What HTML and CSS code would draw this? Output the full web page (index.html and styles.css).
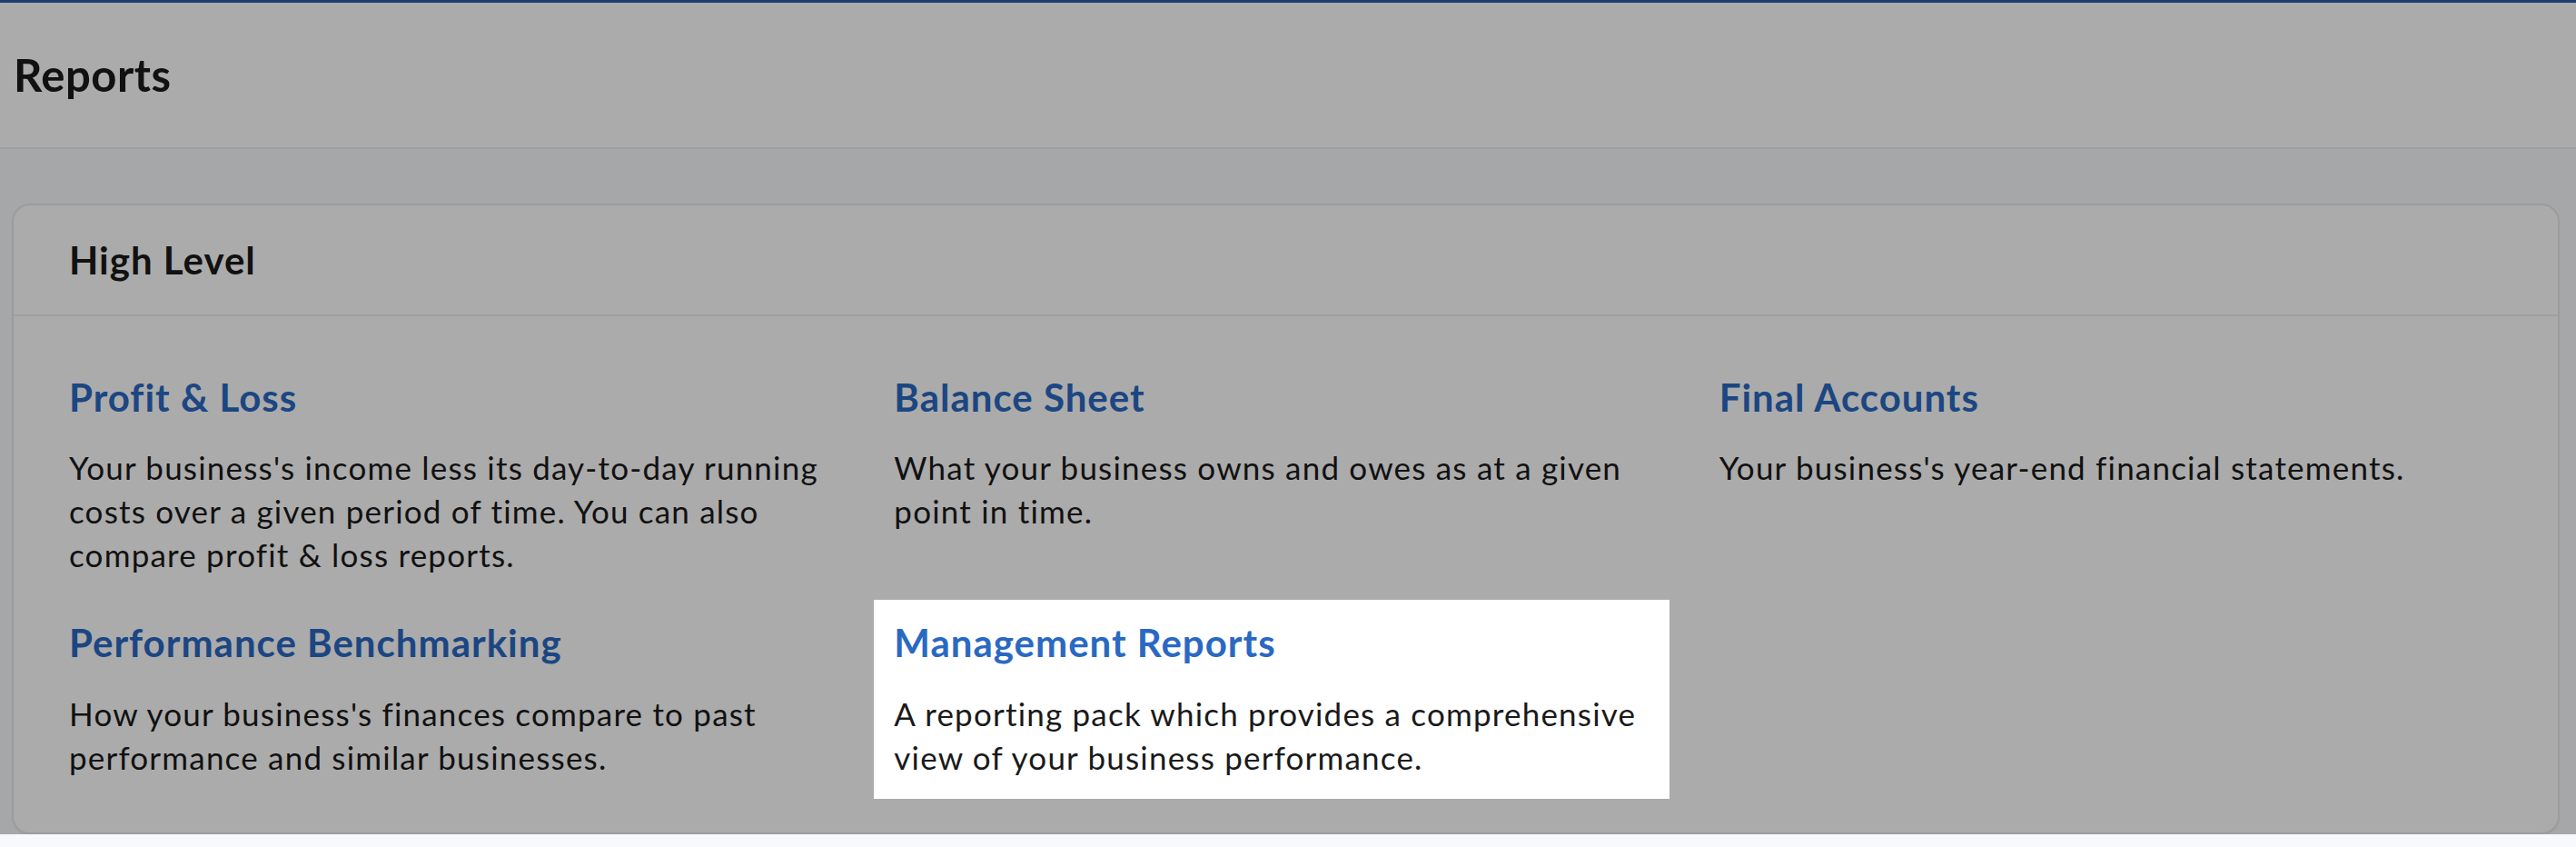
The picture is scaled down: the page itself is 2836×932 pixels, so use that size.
FILE: index.html
```html
<!DOCTYPE html>
<html lang="en">
<head>
    <meta charset="UTF-8">
    <meta name="viewport" content="width=device-width, initial-scale=1.0">
    <title>Reports</title>
    <link rel="stylesheet" href="styles.css">
</head>
<body>
    <div class="page-header">
        <h1>Reports</h1>
    </div>
    <div class="content">
        <div class="card">
            <div class="card-header">
                <h2>High Level</h2>
            </div>
            <div class="card-body">
                <div class="report">
                    <a class="report-title" href="#">Profit &amp; Loss</a>
                    <p>Your business's income less its day-to-day running costs over a given period of time. You can also compare profit &amp; loss reports.</p>
                </div>
                <div class="report">
                    <a class="report-title" href="#">Balance Sheet</a>
                    <p>What your business owns and owes as at a given point in time.</p>
                </div>
                <div class="report">
                    <a class="report-title" href="#">Final Accounts</a>
                    <p>Your business's year-end financial statements.</p>
                </div>
                <div class="report">
                    <a class="report-title" href="#">Performance Benchmarking</a>
                    <p>How your business's finances compare to past performance and similar businesses.</p>
                </div>
                <div class="report spotlight">
                    <a class="report-title" href="#">Management Reports</a>
                    <p>A reporting pack which provides a comprehensive view of your business performance.</p>
                </div>
            </div>
        </div>
    </div>
</body>
</html>
```

FILE: styles.css
```css
body {
    margin: 0;
    font-family: Lato, "Liberation Sans", sans-serif;
    color: #1a1a1a;
    background-color: #f7f9fd;
    overflow: hidden;
}
.page-header {
    height: 159px;
    border-top: 3px solid #2e5da5;
    border-bottom: 2px solid #eeeeef;
    background-color: #fff;
    padding: 0 15px;
    display: flex;
    align-items: center;
}
h1 {
    margin: 0;
    font-size: 49px;
    font-weight: 700;
    line-height: 1.2;
    letter-spacing: 0.5px;
}
.content {
    padding: 60px 18px 0 13px;
}
.card {
    background-color: #fff;
    border: 2px solid #e9e9ec;
    border-radius: 20px;
    box-shadow: 0 1px 2px rgba(0, 0, 0, 0.05);
}
.card-header {
    height: 120px;
    display: flex;
    align-items: center;
    padding: 0 61px;
    border-bottom: 2px solid #ededee;
}
h2 {
    margin: 0;
    font-size: 42px;
    font-weight: 700;
    line-height: 1.2;
    letter-spacing: 1px;
}
.card-body {
    display: grid;
    grid-template-columns: repeat(3, 1fr);
    column-gap: 77px;
    row-gap: 48px;
    padding: 64px 92px 59px 61px;
}
.report-title {
    display: block;
    color: #2a69c2;
    font-size: 42px;
    font-weight: 700;
    line-height: 1.2;
    letter-spacing: 1px;
    text-decoration: none;
    margin-bottom: 28px;
}
.report p {
    margin: 0;
    font-size: 35px;
    line-height: 48px;
    letter-spacing: 1.2px;
}
/* product tour highlight, dims everything else */
.spotlight {
    position: relative;
    z-index: 10;
    background-color: #fff;
    box-shadow: 0 0 0 22px #fff, 0 0 0 4000px rgba(0, 0, 0, 0.33);
}
```
